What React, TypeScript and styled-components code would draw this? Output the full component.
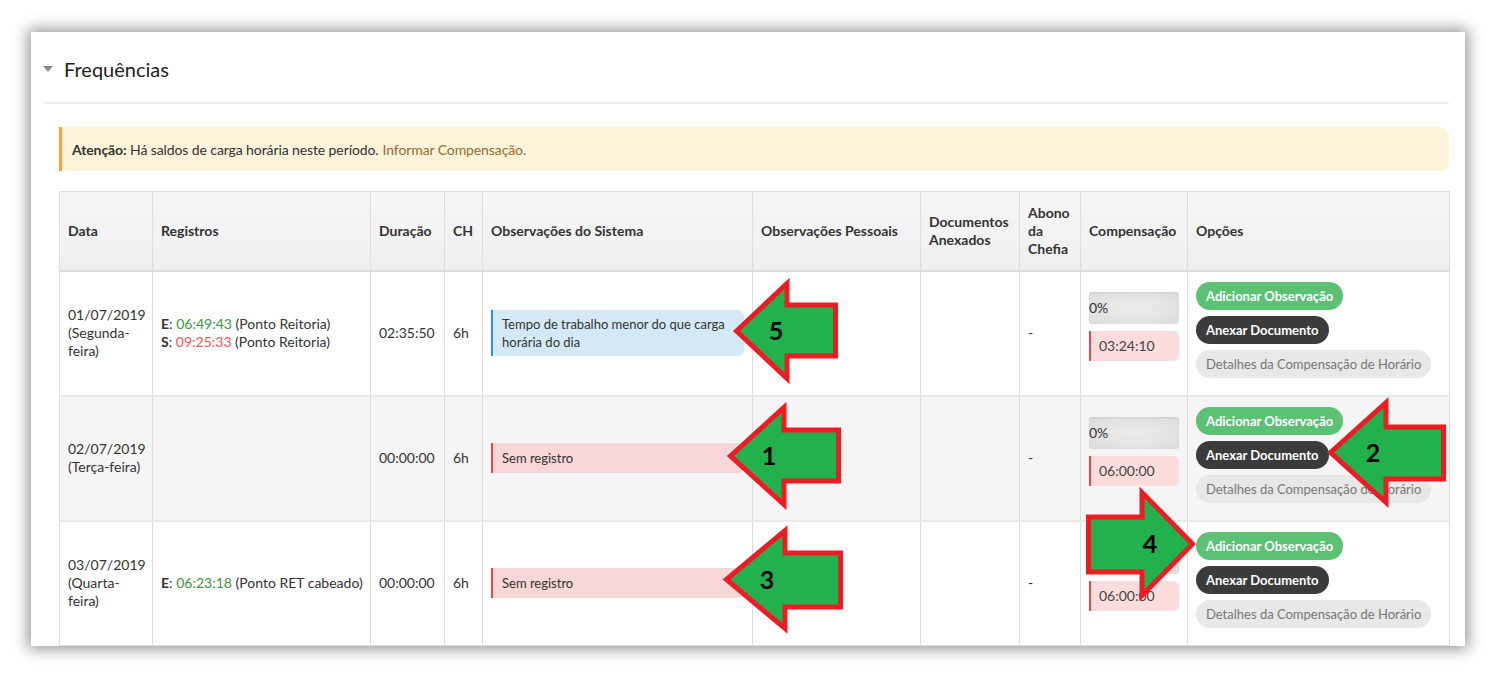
import React from "react";
import styled, { createGlobalStyle } from "styled-components";

const GlobalStyle = createGlobalStyle`
  * { box-sizing: border-box; }
  html, body { margin: 0; padding: 0; background: #fff; }
  body { font-family: Lato, "Open Sans", sans-serif; color: #333; }
`;

const Page = styled.div`
  position: relative;
  width: 1496px;
  height: 678px;
  overflow: hidden;
  padding: 32px 0 0 31px;
`;

const Card = styled.section`
  width: 1434px;
  height: 614px;
  overflow: hidden;
  background: #fff;
  box-shadow: 0 0 14px 3px rgba(0, 0, 0, 0.42);
`;

const PanelHeader = styled.div`
  margin: 0 16px 0 12px;
  height: 72px;
  padding-top: 4px;
  display: flex;
  align-items: center;
  gap: 11px;
  border-bottom: 2px solid #eeeeee;
`;

const Caret = styled.span`
  width: 0;
  height: 0;
  border-left: 5px solid transparent;
  border-right: 5px solid transparent;
  border-top: 6px solid #8a8a8a;
`;

const Title = styled.h2`
  margin: 0;
  font-size: 20px;
  font-weight: 400;
  color: #222;
`;

const Body = styled.div`
  padding: 23px 16px 0 28px;
`;

const Alert = styled.div`
  height: 44px;
  display: flex;
  align-items: center;
  padding: 0 10px;
  background: #fcf3d8;
  border-left: 3px solid #f4a62a;
  border-radius: 0 9px 9px 0;
  font-size: 14px;
  letter-spacing: -0.1px;
  color: #333;
`;

const AlertLink = styled.a`
  color: #9b6a2f;
  margin-left: 4px;
  text-decoration: none;
`;

const Table = styled.table`
  margin-top: 20px;
  width: 1390px;
  table-layout: fixed;
  border-collapse: collapse;
  border: 1px solid #ddd;
  font-size: 14px;
`;

const Th = styled.th<{ $w: number }>`
  width: ${(p) => p.$w}px;
  height: 79px;
  text-align: left;
  vertical-align: middle;
  padding: 6px 8px;
  line-height: 18px;
  font-weight: 700;
  color: #333;
  background: linear-gradient(#f6f6f6, #efefef);
  border: 1px solid #ddd;
  border-bottom: 2px solid #ddd;
`;

const Row = styled.tr<{ $striped?: boolean }>`
  background: ${(p) => (p.$striped ? "#f5f5f5" : "#fff")};
`;

const Td = styled.td`
  height: 125px;
  padding: 10px 8px;
  vertical-align: middle;
  line-height: 18px;
  color: #333;
  border: 1px solid #ddd;
  border-top: 2px solid #e8e8e8;
`;

const RegLine = styled.div`
  white-space: nowrap;
`;

const Mark = styled.b`
  font-weight: 700;
`;

const Time = styled.span<{ $tone: "in" | "out" }>`
  color: ${(p) => (p.$tone === "in" ? "#3a9444" : "#f4545c")};
`;

const ObsBox = styled.div<{ $tone: "info" | "danger" }>`
  padding: 5px 9px;
  min-height: 30px;
  font-size: 13px;
  line-height: 18px;
  color: #333;
  background: ${(p) => (p.$tone === "info" ? "#d4e9f6" : "#f6d6d6")};
  border-left: 2px solid ${(p) => (p.$tone === "info" ? "#2f8fd3" : "#e8474a")};
  border-radius: 0 6px 6px 0;
  display: flex;
  align-items: center;
`;

const Progress = styled.div`
  height: 32px;
  margin-bottom: 7px;
  display: flex;
  align-items: center;
  border-radius: 3px;
  background: radial-gradient(ellipse at center, #ececec 0%, #dcdcdc 100%);
  box-shadow: inset 0 1px 2px rgba(0, 0, 0, 0.08);
  color: #333;
`;

const Balance = styled.div`
  height: 30px;
  margin-bottom: 14px;
  padding-left: 8px;
  display: flex;
  align-items: center;
  background: #fcdcdc;
  border-left: 2px solid #e8474a;
  border-radius: 0 6px 6px 0;
  color: #444;
`;

const Actions = styled.div`
  display: flex;
  flex-direction: column;
  align-items: flex-start;
  gap: 6px;
  padding-bottom: 7px;
`;

const pillColors = {
  green: { bg: "#5cc175", fg: "#fff" },
  dark: { bg: "#3b3b3b", fg: "#fff" },
  light: { bg: "#e8e8e8", fg: "#777" },
};

const Pill = styled.button<{ $variant: keyof typeof pillColors }>`
  height: 28px;
  padding: 0 10px;
  border: none;
  border-radius: 14px;
  font-family: Lato, "Open Sans", sans-serif;
  font-size: 13px;
  font-weight: ${(p) => (p.$variant === "light" ? 400 : 700)};
  background: ${(p) => pillColors[p.$variant].bg};
  color: ${(p) => pillColors[p.$variant].fg};
  white-space: nowrap;
`;

const ArrowSvg = styled.svg<{ $x: number; $y: number }>`
  position: absolute;
  left: ${(p) => p.$x}px;
  top: ${(p) => p.$y}px;
  overflow: visible;
`;

const ArrowLabel = styled.text`
  font-family: Lato, "Open Sans", sans-serif;
  font-weight: 700;
  font-size: 25px;
  fill: #000;
`;

type ArrowProps = {
  x: number;
  y: number;
  w: number;
  h: number;
  head: number;
  st: number;
  sb: number;
  dir: "left" | "right";
  label: string;
  lx: number;
};

const Arrow = ({ x, y, w, h, head, st, sb, dir, label, lx }: ArrowProps) => {
  const s = 2.5;
  const pts: [number, number][] = [
    [s + 1, h / 2],
    [head, s],
    [head, st],
    [w - s, st],
    [w - s, sb],
    [head, sb],
    [head, h - s],
  ];
  const mapped = pts
    .map(([px, py]) => `${dir === "left" ? px : w - px},${py}`)
    .join(" ");
  return (
    <ArrowSvg $x={x} $y={y} width={w} height={h} viewBox={`0 0 ${w} ${h}`}>
      <polygon points={mapped} fill="#22b14c" stroke="#ed1c24" strokeWidth={5} strokeLinejoin="miter" />
      <ArrowLabel x={lx} y={h / 2 + 9} textAnchor="middle">
        {label}
      </ArrowLabel>
    </ArrowSvg>
  );
};

const columns = [
  { label: "Data", w: 93 },
  { label: "Registros", w: 218 },
  { label: "Duração", w: 74 },
  { label: "CH", w: 38 },
  { label: "Observações do Sistema", w: 270 },
  { label: "Observações Pessoais", w: 168 },
  { label: "Documentos Anexados", w: 99 },
  { label: "Abono da Chefia", w: 61 },
  { label: "Compensação", w: 107 },
  { label: "Opções", w: 262 },
];

type Reg = { kind: "E" | "S"; time: string; place: string };

const days: {
  date: string;
  weekday: string;
  regs: Reg[];
  duration: string;
  obs: { text: string; tone: "info" | "danger" };
  balance: string;
}[] = [
  {
    date: "01/07/2019",
    weekday: "(Segunda-feira)",
    regs: [
      { kind: "E", time: "06:49:43", place: "(Ponto Reitoria)" },
      { kind: "S", time: "09:25:33", place: "(Ponto Reitoria)" },
    ],
    duration: "02:35:50",
    obs: { text: "Tempo de trabalho menor do que carga horária do dia", tone: "info" },
    balance: "03:24:10",
  },
  {
    date: "02/07/2019",
    weekday: "(Terça-feira)",
    regs: [],
    duration: "00:00:00",
    obs: { text: "Sem registro", tone: "danger" },
    balance: "06:00:00",
  },
  {
    date: "03/07/2019",
    weekday: "(Quarta-feira)",
    regs: [{ kind: "E", time: "06:23:18", place: "(Ponto RET cabeado)" }],
    duration: "00:00:00",
    obs: { text: "Sem registro", tone: "danger" },
    balance: "06:00:00",
  },
];

const App = () => {
  return (
    <Page>
      <GlobalStyle />
      <Card>
        <PanelHeader>
          <Caret />
          <Title>Frequências</Title>
        </PanelHeader>
        <Body>
          <Alert>
            <Mark>Atenção:</Mark>&nbsp;Há saldos de carga horária neste período.
            <AlertLink href="#">Informar Compensação.</AlertLink>
          </Alert>
          <Table>
            <thead>
              <tr>
                {columns.map((c) => (
                  <Th key={c.label} $w={c.w}>
                    {c.label}
                  </Th>
                ))}
              </tr>
            </thead>
            <tbody>
              {days.map((d, i) => (
                <Row key={d.date} $striped={i % 2 === 1}>
                  <Td>
                    {d.date}
                    <br />
                    {d.weekday}
                  </Td>
                  <Td>
                    {d.regs.map((r) => (
                      <RegLine key={r.kind}>
                        <Mark>{r.kind}</Mark>: <Time $tone={r.kind === "E" ? "in" : "out"}>{r.time}</Time> {r.place}
                      </RegLine>
                    ))}
                  </Td>
                  <Td>{d.duration}</Td>
                  <Td>6h</Td>
                  <Td>
                    <ObsBox $tone={d.obs.tone}>{d.obs.text}</ObsBox>
                  </Td>
                  <Td />
                  <Td />
                  <Td>-</Td>
                  <Td>
                    <Progress>0%</Progress>
                    <Balance>{d.balance}</Balance>
                  </Td>
                  <Td>
                    <Actions>
                      <Pill $variant="green">Adicionar Observação</Pill>
                      <Pill $variant="dark">Anexar Documento</Pill>
                      <Pill $variant="light">Detalhes da Compensação de Horário</Pill>
                    </Actions>
                  </Td>
                </Row>
              ))}
            </tbody>
          </Table>
        </Body>
      </Card>
      <Arrow x={733} y={281} w={105} h={100} head={54} st={24} sb={75} dir="left" label="5" lx={43} />
      <Arrow x={727} y={405} w={114} h={102} head={57} st={25} sb={76} dir="left" label="1" lx={42} />
      <Arrow x={723} y={528} w={120} h={103} head={62} st={25} sb={79} dir="left" label="3" lx={44} />
      <Arrow x={1327} y={400} w={119} h={105} head={59} st={27} sb={79} dir="left" label="2" lx={46} />
      <Arrow x={1086} y={490} w={110} h={108} head={54} st={27} sb={82} dir="right" label="4" lx={64} />
    </Page>
  );
};

export default App;
